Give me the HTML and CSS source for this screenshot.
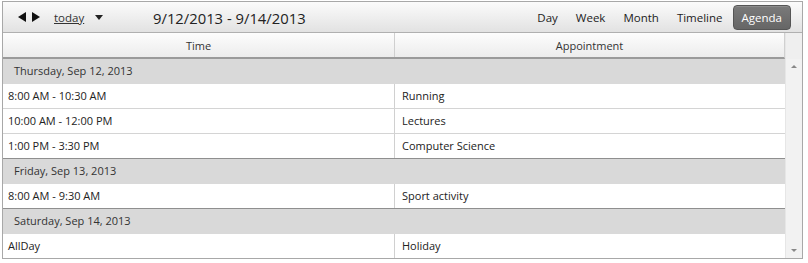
FILE: index.html
```html
<!DOCTYPE html>
<html>
<head>
<meta charset="utf-8">
<link rel="stylesheet" href="styles.css">
</head>
<body>
<div class="scheduler">
  <div class="toolbar">
    <div class="nav">
      <span class="arrow left"></span>
      <span class="arrow right"></span>
      <span class="today">today</span>
      <span class="caret"></span>
    </div>
    <div class="range">9/12/2013 - 9/14/2013</div>
    <div class="views">
      <span class="view">Day</span>
      <span class="view">Week</span>
      <span class="view">Month</span>
      <span class="view">Timeline</span>
      <span class="view active">Agenda</span>
    </div>
  </div>
  <div class="body">
    <div class="grid">
      <div class="head">
        <div class="hcell">Time</div>
        <div class="hcell">Appointment</div>
      </div>
      <div class="group">Thursday, Sep 12, 2013</div>
      <div class="row"><div class="cell">8:00 AM - 10:30 AM</div><div class="cell">Running</div></div>
      <div class="row"><div class="cell">10:00 AM - 12:00 PM</div><div class="cell">Lectures</div></div>
      <div class="row last"><div class="cell">1:00 PM - 3:30 PM</div><div class="cell">Computer Science</div></div>
      <div class="group">Friday, Sep 13, 2013</div>
      <div class="row last"><div class="cell">8:00 AM - 9:30 AM</div><div class="cell">Sport activity</div></div>
      <div class="group">Saturday, Sep 14, 2013</div>
      <div class="row final"><div class="cell">AllDay</div><div class="cell">Holiday</div></div>
    </div>
    <div class="scroll">
      <div class="corner"></div>
      <div class="track">
        <span class="up"></span>
        <span class="down"></span>
      </div>
    </div>
  </div>
</div>
</body>
</html>
```
FILE: styles.css
```css
html, body {
  margin: 0;
  padding: 0;
  background: #fff;
}
body {
  padding: 1px 0 0 2px;
  font-family: "Open Sans", "Noto Sans", sans-serif;
  font-size: 11px;
  color: #333;
}
.scheduler {
  width: 799px;
  border: 1px solid #a8a8a8;
  box-sizing: content-box;
}
.toolbar {
  height: 30px;
  display: flex;
  align-items: center;
  background: linear-gradient(#fbfbfb, #e2e2e2);
  border-bottom: 1px solid #b0b0b0;
}
.nav {
  display: flex;
  align-items: center;
  padding-left: 15px;
  width: 136px;
}
.arrow {
  width: 0;
  height: 0;
  border-top: 5.5px solid transparent;
  border-bottom: 5.5px solid transparent;
}
.arrow.left {
  border-right: 8px solid #111;
}
.arrow.right {
  border-left: 8px solid #111;
  margin-left: 6px;
}
.today {
  margin-left: 14px;
  text-decoration: underline;
  color: #333;
  font-size: 11.5px;
}
.caret {
  margin-left: 11px;
  width: 0;
  height: 0;
  border-left: 4px solid transparent;
  border-right: 4px solid transparent;
  border-top: 5px solid #222;
  margin-top: 1px;
}
.range {
  font-size: 14.8px;
  color: #222;
  margin-top: 1px;
  margin-left: -1px;
}
.views {
  margin-left: auto;
  display: flex;
  align-items: center;
  padding-right: 11px;
}
.view {
  padding: 4px 9px;
  color: #222;
  font-size: 11.5px;
}
.view.active {
  margin-left: 1px;
  background: linear-gradient(#7a7a7a, #666);
  color: #fff;
  border: 1px solid #555;
  border-radius: 4px;
  padding: 4px 8px 4px;
  box-shadow: inset 0 1px 0 #8c8c8c;
}
.body {
  display: flex;
  height: 225px;
}
.grid {
  flex: 1;
  display: flex;
  flex-direction: column;
}
.head {
  display: flex;
  height: 24px;
  background: linear-gradient(#fdfdfd, #ececec);
  border-bottom: 2px solid #9a9a9a;
  border-right: 1px solid #d0d0d0;
}
.hcell {
  flex: 0 0 391px;
  display: flex;
  align-items: center;
  justify-content: center;
  color: #333;
}
.hcell + .hcell {
  flex: 1;
  border-left: 1px solid #cfcfcf;
}
.group {
  height: 25px;
  line-height: 24px;
  background: #d9d9d9;
  padding-left: 11px;
  color: #333;
}
.row {
  display: flex;
  height: 24px;
  border-bottom: 1px solid #d4d4d4;
}
.row.last {
  border-bottom: 1px solid #8f8f8f;
}
.row.final {
  border-bottom: none;
}
.cell {
  flex: 0 0 386px;
  padding-left: 5px;
  padding-bottom: 1px;
  display: flex;
  align-items: center;
  color: #222;
}
.cell + .cell {
  flex: 1;
  border-left: 1px solid #d0d0d0;
  padding-left: 7px;
}
.scroll {
  width: 16px;
  display: flex;
  flex-direction: column;
  background: #f0f0f0;
  border-left: 1px solid #e6e6e6;
}
.corner {
  height: 26px;
  background: #efefef;
}
.track {
  flex: 1;
  position: relative;
  background: #f2f2f2;
}
.up, .down {
  position: absolute;
  left: 5px;
  width: 0;
  height: 0;
  border-left: 3px solid transparent;
  border-right: 3px solid transparent;
}
.up {
  top: 6px;
  border-bottom: 3px solid #888;
}
.down {
  bottom: 6px;
  border-top: 3px solid #888;
}
```
